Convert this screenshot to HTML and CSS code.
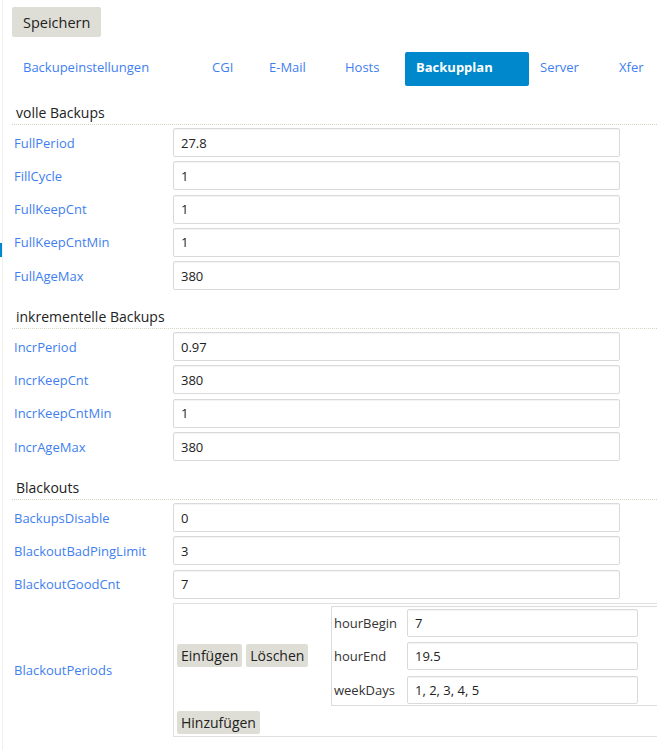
FILE: index.html
```html
<!DOCTYPE html>
<html>

<head>
    <title>Backupplan</title>
    <link rel="stylesheet" href="styles.css">
</head>

<body>
    <div class="edge"></div>
    <div class="edge-mark"></div>
    <div class="page">
        <button class="btn btn-save">Speichern</button>

        <nav class="tabs">
            <a class="tab">Backupeinstellungen</a>
            <a class="tab">CGI</a>
            <a class="tab">E-Mail</a>
            <a class="tab">Hosts</a>
            <a class="tab active">Backupplan</a>
            <a class="tab">Server</a>
            <a class="tab">Xfer</a>
        </nav>

        <section class="group">
            <h2 class="group-title">volle Backups</h2>
            <div class="field"><label>FullPeriod</label><input class="text" value="27.8"></div>
            <div class="field"><label>FillCycle</label><input class="text" value="1"></div>
            <div class="field"><label>FullKeepCnt</label><input class="text" value="1"></div>
            <div class="field"><label>FullKeepCntMin</label><input class="text" value="1"></div>
            <div class="field"><label>FullAgeMax</label><input class="text" value="380"></div>
        </section>

        <section class="group">
            <h2 class="group-title">inkrementelle Backups</h2>
            <div class="field"><label>IncrPeriod</label><input class="text" value="0.97"></div>
            <div class="field"><label>IncrKeepCnt</label><input class="text" value="380"></div>
            <div class="field"><label>IncrKeepCntMin</label><input class="text" value="1"></div>
            <div class="field"><label>IncrAgeMax</label><input class="text" value="380"></div>
        </section>

        <section class="group">
            <h2 class="group-title">Blackouts</h2>
            <div class="field"><label>BackupsDisable</label><input class="text" value="0"></div>
            <div class="field"><label>BlackoutBadPingLimit</label><input class="text" value="3"></div>
            <div class="field"><label>BlackoutGoodCnt</label><input class="text" value="7"></div>
            <div class="field"><label>BlackoutPeriods</label>
                <div class="periods">
                    <div class="period">
                        <div class="period-actions">
                            <button class="btn btn-small">Einfügen</button>
                            <button class="btn btn-small">Löschen</button>
                        </div>
                        <div class="period-table">
                            <div class="sub-field"><span>hourBegin</span><input class="text sub" value="7"></div>
                            <div class="sub-field"><span>hourEnd</span><input class="text sub" value="19.5"></div>
                            <div class="sub-field"><span>weekDays</span><input class="text sub" value="1, 2, 3, 4, 5"></div>
                        </div>
                    </div>
                    <button class="btn btn-small">Hinzufügen</button>
                </div>
            </div>
        </section>
    </div>
</body>

</html>
```

FILE: styles.css
```css
body {
    margin: 0;
    padding: 0;
    font-family: "Open Sans", "Noto Sans", sans-serif;
    font-size: 13px;
    color: #222;
    background-color: #fff;
}

.edge {
    position: fixed;
    left: 2px;
    top: 0;
    bottom: 0;
    width: 1px;
    background-color: #f0f0f0;
}

.edge-mark {
    position: fixed;
    left: 0;
    top: 243px;
    width: 2px;
    height: 14px;
    background-color: #0088cc;
}

.page {
    width: 645px;
    padding: 7px 0 0 12px;
}

.btn {
    font-family: inherit;
    color: #222;
    background-color: #dfded6;
    border: none;
    border-radius: 2px;
    cursor: pointer;
}

.btn-save {
    display: block;
    height: 30px;
    padding: 0 11px;
    font-size: 14.5px;
}

.btn-small {
    height: 23px;
    padding: 0 4px;
    font-size: 14px;
}

.tabs {
    display: grid;
    grid-template-columns: 189px 57px 76px 71px 124px 79px 1fr;
    margin-top: 15px;
}

.tab {
    padding: 6px 11px 10px;
    line-height: 18px;
    color: #3f80f0;
    white-space: nowrap;
    border-radius: 2px;
}

.tab.active {
    background-color: #0088cc;
    color: #fff;
    font-weight: bold;
}

.group {
    margin-top: 17px;
}

.group-title {
    margin: 0 0 3px;
    padding: 0 0 1px 4px;
    font-size: 14px;
    font-weight: normal;
    line-height: 20px;
    border-bottom: 1px dotted #d6d2bd;
}

.field {
    display: grid;
    grid-template-columns: 161px 1fr;
    align-items: center;
    margin-bottom: 4.3px;
}

.field label {
    padding-left: 2px;
    color: #3f80f0;
}

.text {
    box-sizing: border-box;
    width: 447px;
    height: 29px;
    padding: 0 7px;
    font-family: inherit;
    font-size: 13px;
    color: #222;
    background-color: #fff;
    border: 1px solid #dadada;
    border-radius: 2px;
    box-shadow: inset 0 1px 1px rgba(0, 0, 0, 0.05);
}

.periods {
    padding: 2px 0 2px 3px;
    border: 1px solid #e0e0e0;
    border-right: none;
}

.period {
    display: grid;
    grid-template-columns: 154px 1fr;
    align-items: center;
    margin-bottom: 5px;
}

.period-actions {
    display: flex;
    gap: 4px;
}

.period-table {
    display: flex;
    flex-direction: column;
    gap: 5.5px;
    padding: 2px 2px 1px;
    border: 1px solid #dcdcdc;
    border-right: none;
}

.sub-field {
    display: grid;
    grid-template-columns: 73px 1fr;
    align-items: center;
    color: #333;
}

.text.sub {
    width: 231px;
    height: 28px;
}
```
